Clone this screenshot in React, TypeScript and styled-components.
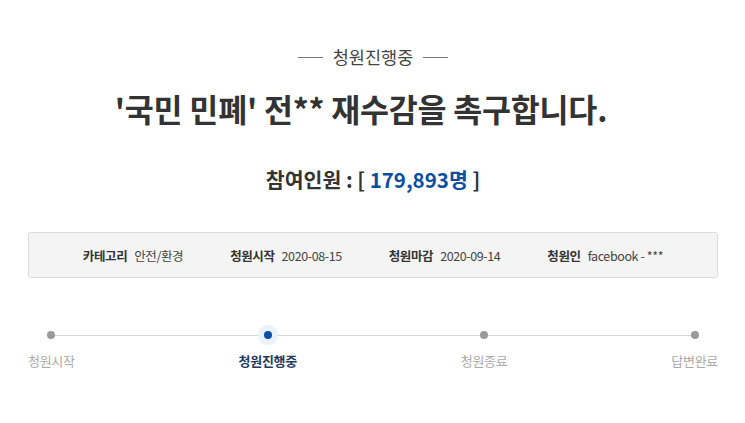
import React from "react";
import styled, { createGlobalStyle } from "styled-components";

const Global = createGlobalStyle`
  html, body { margin: 0; padding: 0; background: #fff; }
  body { font-family: "Noto Sans CJK KR", "Noto Sans", sans-serif; color: #333; }
`;

const Page = styled.div`
  width: 745px;
  padding: 44px 27px 0 28px;
  box-sizing: border-box;
`;

const Status = styled.div`
  display: flex;
  align-items: center;
  justify-content: center;
  gap: 10px;
  font-size: 17.5px;
  line-height: 26px;
  color: #444;
  &::before, &::after {
    content: "";
    width: 25px;
    height: 1px;
    background: #777;
  }
`;

const Title = styled.h1`
  margin: 16px 0 0;
  padding-right: 24px;
  text-align: center;
  font-size: 31.5px;
  font-weight: 700;
  line-height: 44px;
  color: #333;
  letter-spacing: -0.2px;
`;

const Count = styled.div`
  margin-top: 34px;
  text-align: center;
  font-size: 20.5px;
  font-weight: 700;
  line-height: 30px;
  color: #333;
`;

const Num = styled.span`
  color: #0b4ea2;
`;

const InfoBox = styled.div`
  margin-top: 38px;
  height: 46px;
  box-sizing: border-box;
  background: #f4f4f4;
  border: 1px solid #dcdcdc;
  border-radius: 3px;
  display: flex;
  align-items: center;
  justify-content: center;
  gap: 47px;
`;

const Item = styled.div`
  display: flex;
  align-items: center;
  gap: 7px;
  font-size: 12.5px;
  color: #444;
  letter-spacing: -0.4px;
`;

const Label = styled.span`
  font-weight: 700;
  color: #333;
`;

const Steps = styled.div`
  position: relative;
  margin-top: 52px;
  display: flex;
  justify-content: space-between;
  &::before {
    content: "";
    position: absolute;
    left: 22px;
    right: 22px;
    top: 5px;
    height: 1px;
    background: #d6d6d6;
  }
`;

const Step = styled.div<{ $active?: boolean }>`
  position: relative;
  display: flex;
  flex-direction: column;
  align-items: center;
  gap: 13px;
  font-size: 13px;
  line-height: 18px;
  letter-spacing: -0.3px;
  color: ${(p) => (p.$active ? "#233a5e" : "#aaa")};
  font-weight: ${(p) => (p.$active ? 700 : 400)};
`;

const Dot = styled.span<{ $active?: boolean }>`
  width: 8px;
  height: 8px;
  margin-top: 1px;
  border-radius: 50%;
  background: ${(p) => (p.$active ? "#0b4ea2" : "#9a9a9a")};
  box-shadow: ${(p) => (p.$active ? "0 0 0 6px #eaf2fc" : "none")};
`;

const steps = [
  { name: "청원시작" },
  { name: "청원진행중", active: true },
  { name: "청원종료" },
  { name: "답변완료" },
];

export default function App() {
  return (
    <Page>
      <Global />
      <Status>청원진행중</Status>
      <Title>'국민 민폐' 전** 재수감을 촉구합니다.</Title>
      <Count>
        참여인원 : [ <Num>179,893명</Num> ]
      </Count>
      <InfoBox>
        <Item>
          <Label>카테고리</Label>
          <span>안전/환경</span>
        </Item>
        <Item>
          <Label>청원시작</Label>
          <span>2020-08-15</span>
        </Item>
        <Item>
          <Label>청원마감</Label>
          <span>2020-09-14</span>
        </Item>
        <Item>
          <Label>청원인</Label>
          <span>facebook - ***</span>
        </Item>
      </InfoBox>
      <Steps>
        {steps.map((s) => (
          <Step key={s.name} $active={s.active}>
            <Dot $active={s.active} />
            {s.name}
          </Step>
        ))}
      </Steps>
    </Page>
  );
}
